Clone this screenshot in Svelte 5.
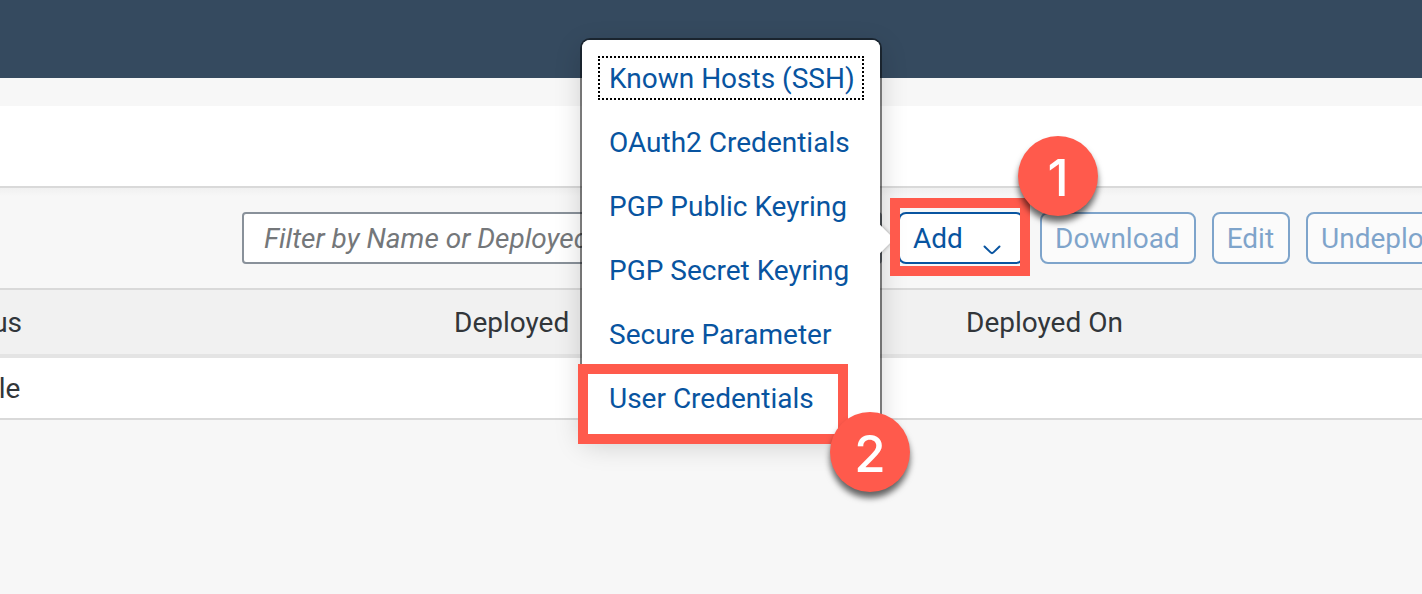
<script>
  const kinds = [
    'Known Hosts (SSH)',
    'OAuth2 Credentials',
    'PGP Public Keyring',
    'PGP Secret Keyring',
    'Secure Parameter',
    'User Credentials'
  ];
  const actions = ['Download', 'Edit', 'Undeploy'];
  let active = $state(0);
  let filter = $state('');
</script>

<div class="page">
  <header class="shell"></header>
  <div class="spacer"></div>
  <div class="title"></div>

  <div class="toolbar">
    <input class="filter" type="search" aria-label="Filter by Name or Deployed By" placeholder="Filter by Name or Deployed By" bind:value={filter} />
    <div class="add-wrap">
      <button class="btn add" type="button" aria-haspopup="menu" aria-expanded="true">
        Add
        <svg class="chevron" viewBox="0 0 18 10" aria-hidden="true">
          <path d="M1.5 1.5 L7.8 7.6 Q9 8.6 10.2 7.6 L16.5 1.5" />
        </svg>
      </button>
      <div class="popover">
        <div class="menu" role="menu">
          {#each kinds as kind, i}
            <button class="item" class:active={active === i} type="button" role="menuitem" onclick={() => (active = i)}>{kind}</button>
          {/each}
        </div>
        <div class="mark mark-user"><span class="badge">2</span></div>
      </div>
      <div class="mark mark-add"><span class="badge">1</span></div>
    </div>
    {#each actions as action}
      <button class="btn" type="button" disabled>{action}</button>
    {/each}
  </div>

  <table>
    <thead>
      <tr><th>Status</th><th>Deployed</th><th>Deployed On</th></tr>
    </thead>
    <tbody>
      <tr><td>Stable</td><td></td><td></td></tr>
    </tbody>
  </table>
</div>

<style>
  :global(body) {
    background: #f7f7f7;
  }
  .page {
    min-height: 100vh;
    overflow: hidden;
    background: #f7f7f7;
    color: #32363a;
    font: 28px/36px Roboto, sans-serif;
  }
  .shell {
    height: 78px;
    background: #354a5f;
  }
  .spacer {
    height: 28px;
  }
  .title {
    height: 80px;
    background: #fff;
    border-bottom: 2px solid #d9d9d9;
  }
  .toolbar {
    display: flex;
    gap: 16px;
    padding: 24px 0 24px 242px;
    background: linear-gradient(#f0f0f0, #f7f7f7 8px);
  }
  .filter,
  .btn {
    box-sizing: border-box;
    height: 52px;
    flex: none;
    font: inherit;
    background: #fff;
  }
  .filter {
    width: 640px;
    margin: 0;
    padding: 0 20px;
    border: 2px solid #89919a;
    border-radius: 4px;
    appearance: none;
  }
  .filter::placeholder {
    color: #74777a;
    font-style: italic;
    opacity: 1;
  }
  .btn {
    padding: 2px 14px 0 13px;
    border: 2px solid #0854a0;
    border-radius: 8px;
    color: #0854a0;
  }
  .btn:disabled {
    opacity: 0.5;
  }
  .add-wrap {
    position: relative;
    flex: none;
  }
  .add {
    display: flex;
    align-items: center;
    gap: 20px;
    width: 126px;
  }
  .chevron {
    width: 18px;
    height: 10px;
    flex: none;
    margin-top: 22px;
    fill: none;
    stroke: #0854a0;
    stroke-width: 2;
    stroke-linecap: round;
  }
  .popover {
    position: absolute;
    z-index: 2;
    top: -172px;
    right: calc(100% + 18px);
    width: 298px;
    border-radius: 8px;
    background: #fff;
    box-shadow:
      0 0 0 2px rgba(0, 0, 0, 0.48),
      0 8px 28px rgba(0, 0, 0, 0.18);
  }
  .popover::after {
    content: '';
    position: absolute;
    top: 189px;
    right: -10px;
    width: 20px;
    height: 20px;
    background: #fff;
    transform: rotate(45deg);
    box-shadow: 1px -1px 3px rgba(0, 0, 0, 0.2);
  }
  .menu {
    position: relative;
    z-index: 1;
    display: flex;
    flex-direction: column;
    gap: 20px;
    padding: 16px;
    border-radius: 8px;
    background: #fff;
  }
  .item {
    height: 44px;
    padding: 2px 8px 0 9px;
    border: 2px solid transparent;
    background: none;
    color: #0854a0;
    font: inherit;
    text-align: left;
    white-space: nowrap;
  }
  .item.active {
    border: 2px dotted #000;
  }
  .mark {
    position: absolute;
    z-index: 3;
    border: 10px solid #ff5a4c;
    pointer-events: none;
  }
  .mark-user {
    left: -4px;
    right: 32px;
    bottom: -8px;
    height: 60px;
  }
  .mark-add {
    inset: -14px -6px -12px -8px;
  }
  .badge {
    position: absolute;
    width: 80px;
    height: 80px;
    border-radius: 50%;
    background: #ff5a4c;
    box-shadow: 0 6px 6px rgba(0, 0, 0, 0.6);
    color: #fff;
    font: 500 51px/84px Inter, sans-serif;
    text-align: center;
  }
  .mark-user .badge {
    right: -72px;
    bottom: -58px;
  }
  .mark-add .badge {
    top: -72px;
    right: -78px;
  }
  table {
    width: calc(100% + 74px);
    margin-left: -74px;
    border-collapse: separate;
    border-spacing: 0;
    table-layout: fixed;
  }
  th,
  td {
    box-sizing: border-box;
    width: 512px;
    padding: 2px 16px 0;
    font-weight: 400;
    text-align: left;
  }
  th:last-child,
  td:last-child {
    width: auto;
  }
  th {
    height: 70px;
    border-top: 2px solid #d9d9d9;
    border-bottom: 4px solid #e4e4e4;
    background: #f1f1f1;
  }
  td {
    height: 62px;
    border-bottom: 2px solid #d9d9d9;
    background: #fff;
  }
</style>
